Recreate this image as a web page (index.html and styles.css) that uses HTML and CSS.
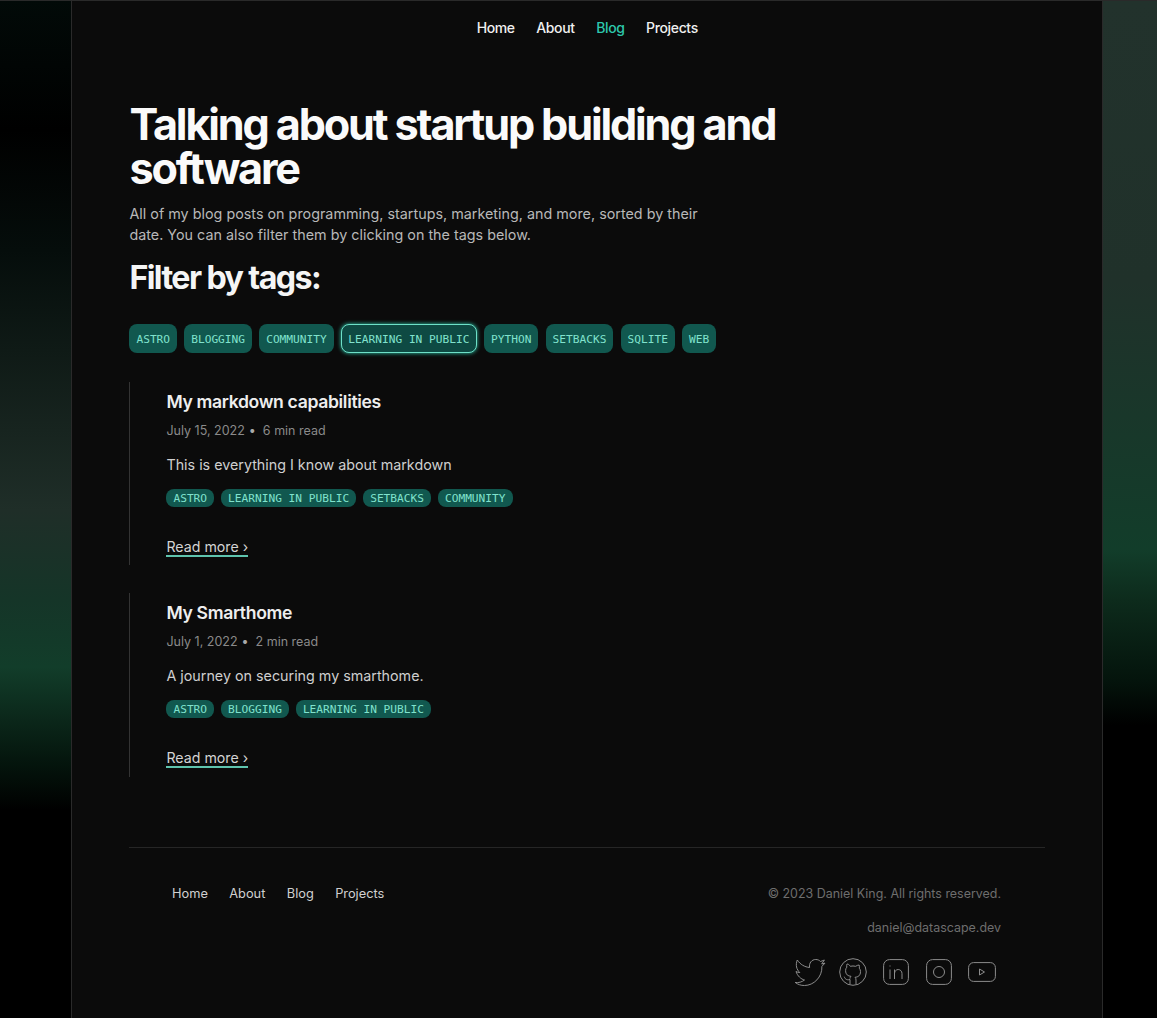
FILE: index.html
```html
<!DOCTYPE html>
<html lang="en">
<head>
  <meta charset="utf-8">
  <title>Blog</title>
  <link rel="stylesheet" href="styles.css">
</head>
<body>
  <div class="page">
    <nav class="topnav">
      <a href="#">Home</a>
      <a href="#">About</a>
      <a href="#" class="current">Blog</a>
      <a href="#">Projects</a>
    </nav>

    <main class="content">
      <h1>Talking about startup building and software</h1>
      <p class="lead">All of my blog posts on programming, startups, marketing, and more, sorted by their date. You can also filter them by clicking on the tags below.</p>
      <h2>Filter by tags:</h2>

      <div class="filter-tags">
        <a href="#" class="tag">ASTRO</a>
        <a href="#" class="tag">BLOGGING</a>
        <a href="#" class="tag">COMMUNITY</a>
        <a href="#" class="tag selected">LEARNING IN PUBLIC</a>
        <a href="#" class="tag">PYTHON</a>
        <a href="#" class="tag">SETBACKS</a>
        <a href="#" class="tag">SQLITE</a>
        <a href="#" class="tag">WEB</a>
      </div>

      <article class="post">
        <h3>My markdown capabilities</h3>
        <div class="meta"><span>July 15, 2022</span><span class="dot">•</span><span>6 min read</span></div>
        <p class="summary">This is everything I know about markdown</p>
        <div class="post-tags">
          <a href="#" class="tag small">ASTRO</a>
          <a href="#" class="tag small">LEARNING IN PUBLIC</a>
          <a href="#" class="tag small">SETBACKS</a>
          <a href="#" class="tag small">COMMUNITY</a>
        </div>
        <a href="#" class="more">Read more ›</a>
      </article>

      <article class="post">
        <h3>My Smarthome</h3>
        <div class="meta"><span>July 1, 2022</span><span class="dot">•</span><span>2 min read</span></div>
        <p class="summary">A journey on securing my smarthome.</p>
        <div class="post-tags">
          <a href="#" class="tag small">ASTRO</a>
          <a href="#" class="tag small">BLOGGING</a>
          <a href="#" class="tag small">LEARNING IN PUBLIC</a>
        </div>
        <a href="#" class="more">Read more ›</a>
      </article>
    </main>

    <footer class="footer">
      <nav class="footnav">
        <a href="#">Home</a>
        <a href="#">About</a>
        <a href="#">Blog</a>
        <a href="#">Projects</a>
      </nav>
      <div class="footinfo">
        <p>© 2023 Daniel King. All rights reserved.</p>
        <p class="mail">daniel@datascape.dev</p>
        <div class="socials">
          <svg class="bird" width="32" height="28" viewBox="0 0 32 28"><path d="M1 24.500c3.500.5 7-.5 9.500-2.500-3.500-.8-7-4-8.500-8.500 1.200.6 2.400 1 3.800 1.100C2.500 11.500 1.300 7 3.300 2c3 4.500 7.300 7 12.300 7.500-.8-4.300 2-8 6.200-8 1.900 0 3.500.7 4.700 2l3.900-1.500-2.700 4 3.300-.9-3.100 3.300c.5 10.500-8 19.100-17.500 19.100-3.500 0-6.500-1-9.100-3z"/></svg>
          <svg width="28" height="28" viewBox="0 0 28 28"><circle cx="14" cy="14" r="13.300"/><path d="M11 26v-4.500c-4 1-5-1-5.800-2.800M17 26v-4c0-1.300-.3-2-1-2.700 3-.3 5.500-1.500 5.500-5.800 0-1.300-.5-2.400-1.200-3.300.2-1 .2-2.200-.2-3.200-1.200 0-2.300.6-3.400 1.300a11 11 0 0 0-5.400 0C10.200 6.600 9.100 6 8 6c-.4 1-.4 2.200-.2 3.200-.8.900-1.200 2-1.200 3.300 0 4.300 2.500 5.500 5.400 5.800-.6.600-1 1.300-1 2.300"/></svg>
          <svg class="in" width="26" height="26" viewBox="0 0 26 26"><rect x=".6" y=".6" width="24.800" height="24.800" rx="6"/><path d="M7 10.500v9.500M7 6.500v1M11.500 20v-9.500M11.500 14.500c0-2.300 1.700-4 3.700-4s3.800 1.700 3.800 4V20"/></svg>
          <svg width="26" height="26" viewBox="0 0 26 26"><rect x=".6" y=".6" width="24.800" height="24.800" rx="6"/><circle cx="13" cy="13" r="5.500"/></svg>
          <svg width="28" height="20" viewBox="0 0 28 20"><rect x=".6" y=".6" width="26.800" height="18.800" rx="5"/><path d="M11.500 7l5 3-5 3z"/></svg>
        </div>
      </div>
    </footer>
  </div>
</body>
</html>
```

FILE: styles.css
```css
* {
  box-sizing: border-box;
}

html {
  height: 100%;
}

body {
  margin: 0;
  min-height: 100%;
  border-top: 1px solid #2a2a2a;
  background-color: #000;
  background-image:
    linear-gradient(to bottom, #22322c 0, #20312a 280px, #123d2a 550px, #0d2b1c 600px, #04140c 680px, #000 725px),
    linear-gradient(to bottom, #020a08 0, #000 130px, #050d0b 250px, #0f1a16 350px, #1f2e28 510px, #153528 600px, #123d2a 667px, #0c2a1c 713px, #04140c 765px, #000 810px);
  background-position: right top, left top;
  background-size: 55px 100%, 72px 100%;
  background-repeat: no-repeat;
  color: #ddd;
  font-family: Inter, "Liberation Sans", sans-serif;
}

a {
  color: inherit;
  text-decoration: none;
}

.page {
  width: 1032px;
  min-height: 1017px;
  margin-left: 71px;
  padding: 0 57px 0 57.450px;
  background: #0b0b0b;
  border-left: 1px solid #2a2a2a;
  border-right: 1px solid #2a2a2a;
}

.topnav {
  display: flex;
  justify-content: center;
  gap: 21.500px;
  padding-top: 18px;
  font-size: 14px;
  line-height: 18px;
  font-weight: 500;
  letter-spacing: -0.360px;
  color: #f0f0f0;
}

.topnav .current {
  color: #2dc9ad;
}

.content {
  padding-top: 65px;
}

h1 {
  width: 700px;
  margin: 0;
  font-size: 43.200px;
  line-height: 44px;
  font-weight: 700;
  letter-spacing: -2.160px;
  color: #fafafa;
}

.lead {
  width: 600px;
  margin: 13px 0 0;
  font-size: 14.350px;
  line-height: 21px;
  color: #b8b8b8;
}

h2 {
  margin: 13px 0 0;
  font-size: 32.200px;
  line-height: 40px;
  font-weight: 700;
  letter-spacing: -1.600px;
  color: #f5f5f5;
}

.filter-tags {
  display: flex;
  gap: 7.150px;
  margin-top: 26px;
}

.filter-tags .tag {
  padding-top: 1px;
}

.tag {
  padding: 0 7px;
  height: 29px;
  display: flex;
  align-items: center;
  border-radius: 8px;
  background: #11584f;
  color: #80e2cd;
  font-family: "DejaVu Sans Mono", monospace;
  font-size: 11.180px;
}

.filter-tags .tag.selected {
  padding: 1px 6.500px 0;
  border: 1px solid #6ee0c8;
  box-shadow: 0 0 4px #2dc9ad;
  background: #0e4a43;
}

.tag.small {
  height: 18px;
}

.post {
  margin-top: 29px;
  padding: 8px 0 0 36px;
  height: 183px;
  border-left: 1px solid #333;
}

.post + .post {
  margin-top: 28px;
  height: 184px;
}

h3 {
  margin: 0;
  font-size: 17.600px;
  line-height: 24px;
  font-weight: 600;
  letter-spacing: -0.350px;
  color: #eee;
}

.meta {
  display: flex;
  margin-top: 6.500px;
  font-size: 12.500px;
  line-height: 20px;
  color: #8a8a8a;
}

.dot {
  margin: 0 7px 0 4px;
  color: #aaa;
}

.summary {
  margin: 13.500px 0 0;
  font-size: 14.300px;
  line-height: 22px;
  color: #cfcfcf;
}

.post-tags {
  display: flex;
  gap: 7px;
  margin-top: 13px;
}

.more {
  display: inline-block;
  margin-top: 31px;
  font-size: 14.200px;
  line-height: 17px;
  color: #d4d4d4;
  border-bottom: 2px solid #5fc4ae;
}

.footer {
  display: flex;
  justify-content: space-between;
  margin-top: 70px;
  padding: 36px 44px 0 42.600px;
  border-top: 1px solid #262626;
}

.footnav {
  display: flex;
  gap: 21.400px;
  font-size: 12.800px;
  line-height: 20px;
  color: #d0d0d0;
}

.footinfo {
  display: flex;
  flex-direction: column;
  align-items: flex-end;
  font-size: 12.450px;
  color: #6e6e6e;
}

.footinfo p {
  margin: 0;
  line-height: 20px;
}

.footinfo .mail {
  margin-top: 14px;
}

.socials {
  display: flex;
  align-items: center;
  gap: 16px;
  margin-top: 20px;
  padding-right: 5px;
}

.socials .bird {
  margin-right: -3px;
}

.socials .in {
  margin-right: 1px;
}

.socials svg {
  fill: none;
  stroke: #8c8c8c;
  stroke-width: 1;
}
```
